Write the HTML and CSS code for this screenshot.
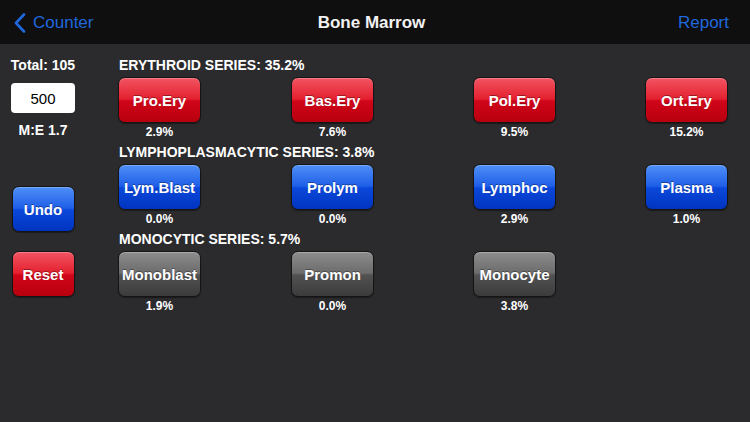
FILE: index.html
```html
<!DOCTYPE html>
<html lang="en">
<head>
  <meta charset="UTF-8" />
  <title>Bone Marrow</title>
  <link rel="stylesheet" href="styles.css">
</head>
<body>

  <header class="navbar">
    <a class="nav-back" href="#">
      <svg width="12" height="20" viewBox="0 0 12 20"><path d="M10 1.5 L2 10 L10 18.5" fill="none" stroke="currentColor" stroke-width="2.6" stroke-linecap="round" stroke-linejoin="round"/></svg>
      Counter
    </a>
    <div class="nav-title">Bone Marrow</div>
    <a class="nav-action" href="#">Report</a>
  </header>

  <main class="counter">
    <aside class="sidebar">
      <div class="total">Total: 105</div>
      <input class="limit" type="text" value="500" />
      <div class="ratio">M:E 1.7</div>
      <button class="cell-btn blue side-btn undo">Undo</button>
      <button class="cell-btn red side-btn reset">Reset</button>
    </aside>

    <section class="series-list">
      <div class="series">
        <h3>ERYTHROID SERIES: 35.2%</h3>
        <div class="cells">
          <div class="cell"><button class="cell-btn red">Pro.Ery</button><span>2.9%</span></div>
          <div class="cell"><button class="cell-btn red">Bas.Ery</button><span>7.6%</span></div>
          <div class="cell"><button class="cell-btn red">Pol.Ery</button><span>9.5%</span></div>
          <div class="cell"><button class="cell-btn red">Ort.Ery</button><span>15.2%</span></div>
        </div>
      </div>

      <div class="series">
        <h3>LYMPHOPLASMACYTIC SERIES: 3.8%</h3>
        <div class="cells">
          <div class="cell"><button class="cell-btn blue">Lym.Blast</button><span>0.0%</span></div>
          <div class="cell"><button class="cell-btn blue">Prolym</button><span>0.0%</span></div>
          <div class="cell"><button class="cell-btn blue">Lymphoc</button><span>2.9%</span></div>
          <div class="cell"><button class="cell-btn blue">Plasma</button><span>1.0%</span></div>
        </div>
      </div>

      <div class="series">
        <h3>MONOCYTIC SERIES: 5.7%</h3>
        <div class="cells">
          <div class="cell"><button class="cell-btn gray">Monoblast</button><span>1.9%</span></div>
          <div class="cell"><button class="cell-btn gray">Promon</button><span>0.0%</span></div>
          <div class="cell"><button class="cell-btn gray">Monocyte</button><span>3.8%</span></div>
        </div>
      </div>
    </section>
  </main>

</body>
</html>
```

FILE: styles.css
```css
body {
  margin: 0;
  width: 750px;
  height: 422px;
  overflow: hidden;
  background: #2b2b2d;
  font-family: "Liberation Sans", Arial, sans-serif;
  color: #fff;
}

/* top bar */
.navbar {
  height: 44px;
  background: #0f0f0f;
  display: grid;
  grid-template-columns: 1fr auto 1fr;
  align-items: center;
  padding: 1px 21px 0 14px;
  box-sizing: border-box;
}
.navbar a {
  color: #1f68dd;
  text-decoration: none;
  font-size: 17px;
}
.nav-back {
  display: flex;
  align-items: center;
  gap: 7px;
}
.nav-title {
  font-size: 17px;
  font-weight: bold;
  color: #f2f2f2;
}
.nav-action {
  justify-self: end;
}

/* main area */
.counter {
  display: flex;
  padding-top: 13px;
}
.sidebar {
  width: 64px;
  margin-left: 11px;
  display: flex;
  flex-direction: column;
  align-items: center;
  font-size: 14px;
  font-weight: bold;
  white-space: nowrap;
}
.total {
  line-height: 16px;
}
.limit {
  box-sizing: border-box;
  width: 64px;
  height: 30px;
  margin-top: 10px;
  border: none;
  border-radius: 4px;
  background: #fff;
  color: #000;
  text-align: center;
  font-family: inherit;
  font-size: 15px;
  padding: 0;
}
.ratio {
  line-height: 16px;
  margin-top: 9px;
}
.side-btn {
  width: 63px !important;
  height: 46px !important;
}
.undo {
  margin-top: 48px;
}
.reset {
  margin-top: 19px;
}

.series-list {
  margin-left: 43px;
  display: flex;
  flex-direction: column;
  gap: 5px;
}
.series h3 {
  margin: 0 0 4px 1px;
  font-size: 14px;
  line-height: 16px;
  font-weight: bold;
}
.cells {
  display: grid;
  grid-template-columns: 173px 182px 172px 84px;
}
.cell {
  width: 83px;
  display: flex;
  flex-direction: column;
  align-items: center;
}
.cell span {
  font-size: 12px;
  font-weight: bold;
  line-height: 16px;
  padding-top: 1px;
  margin-bottom: -1px;
}

/* glossy buttons */
.cell-btn {
  box-sizing: border-box;
  width: 83px;
  height: 46px;
  border: 1px solid #151515;
  border-radius: 7px;
  color: #fff;
  font-family: inherit;
  font-size: 15px;
  font-weight: bold;
  text-shadow: 0 -1px 0 rgba(0,0,0,0.35);
  box-shadow: 0 1px 1px rgba(0,0,0,0.4), inset 0 1px 0 rgba(255,255,255,0.25);
  padding: 0;
  cursor: pointer;
}
.cell-btn.red {
  background: linear-gradient(to bottom, #f25462 0%, #e4202f 48%, #d0051a 52%, #b8000e 100%);
}
.cell-btn.blue {
  background: linear-gradient(to bottom, #4f8ff6 0%, #1f5fe8 48%, #0b48da 52%, #0034c0 100%);
}
.cell-btn.gray {
  background: linear-gradient(to bottom, #8c8c8c 0%, #6c6c6c 48%, #525252 52%, #3b3b3b 100%);
}
```
